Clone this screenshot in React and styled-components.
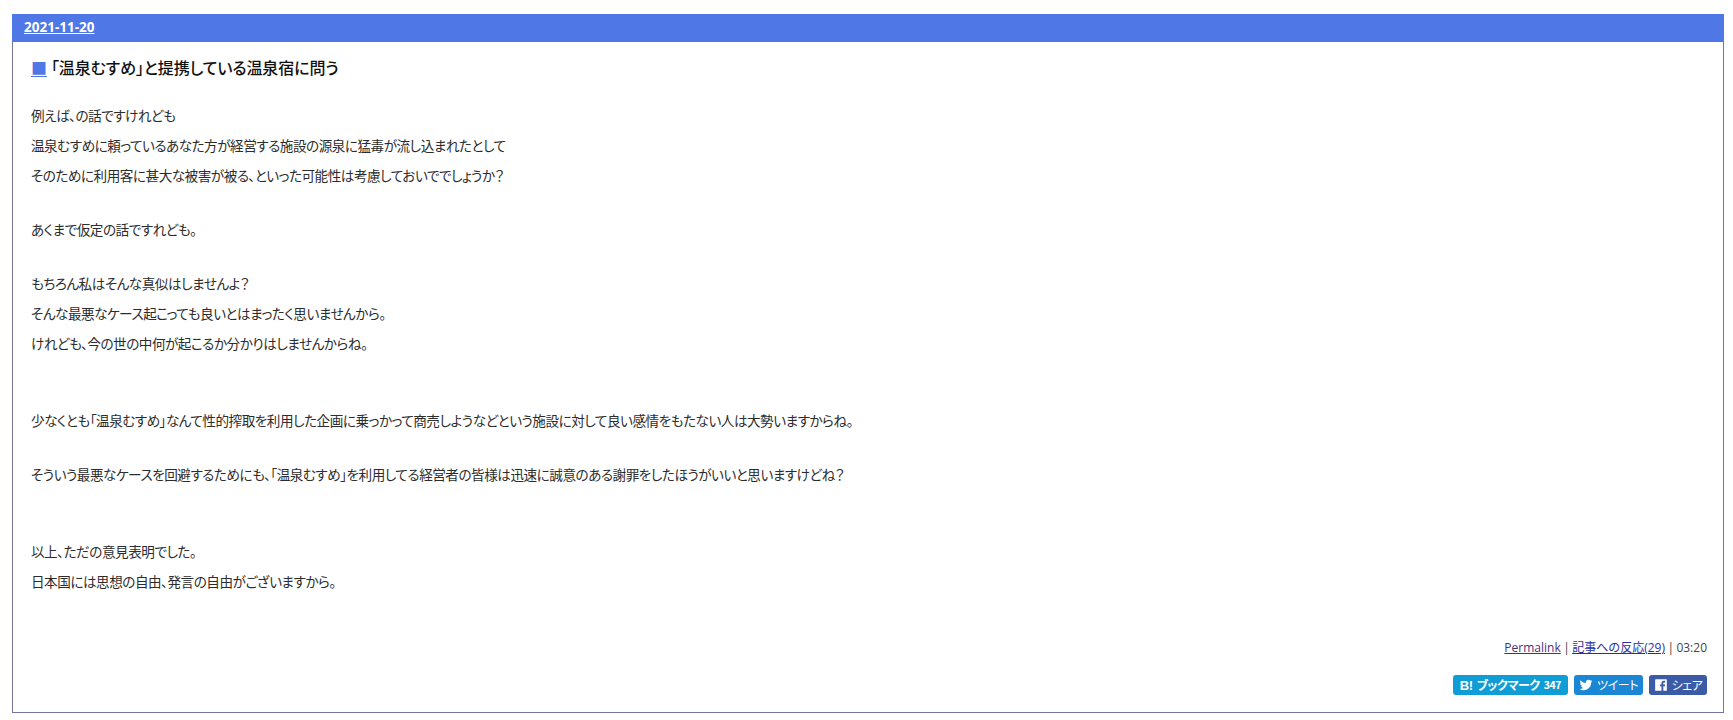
import React from "react";
import styled, { createGlobalStyle } from "styled-components";

const Global = createGlobalStyle`
  html, body { margin: 0; padding: 0; background: #fff; }
  body { font-family: "Noto Sans CJK JP", "Liberation Sans", sans-serif; color: #222; }
`;
const Page = styled.div`
  padding: 14px 9px 7px 12px;
  box-sizing: border-box;
  height: 720px;
`;
const Entry = styled.article`
  border: 1px solid #74769f;
  border-top: 0;
  height: 699px;
  box-sizing: border-box;
  display: flex;
  flex-direction: column;
`;
const DateBar = styled.h2`
  margin: 0 -1px;
  height: 28px;
  background: #4f77e6;
  padding-left: 12px;
  display: flex;
  align-items: center;
  font: bold 13.5px/1 "Open Sans", "Liberation Sans", sans-serif;
  color: #fff;
`;
const DateLink = styled.a`
  color: #fff;
  text-decoration: underline;
`;
const Body = styled.div`
  flex: 1;
  padding: 13px 16px 0 18px;
  display: flex;
  flex-direction: column;
`;
const Title = styled.h3`
  margin: 0 0 21px;
  font-size: 16px;
  line-height: 24px;
  font-weight: 500;
  color: #111;
  display: flex;
  gap: 4px;
  letter-spacing: -0.1px;
  font-feature-settings: "palt";
`;
const Mark = styled.a`
  color: #4f77e6;
  text-decoration: underline;
  text-decoration-skip-ink: none;
  text-underline-offset: 2px;
`;
const Text = styled.div`
  font-size: 13.6px;
  letter-spacing: -0.48px;
  color: #2c2c2c;
  flex: 1;
  font-feature-settings: "palt";
`;
const Line = styled.div`
  line-height: 30px;
`;
const Blank = styled.div`
  height: ${(p) => p.$h}px;
`;
const Meta = styled.div`
  align-self: flex-end;
  font: 12px/20px "Open Sans", "Noto Sans CJK JP", sans-serif;
  word-spacing: -0.7px;
  color: #444;
`;
const MetaLink = styled.a`
  color: ${(p) => p.$c};
  text-decoration: underline;
`;
const Buttons = styled.div`
  display: flex;
  justify-content: flex-end;
  gap: 6px;
  margin: 17px 0 17px;
`;
const Btn = styled.a`
  width: ${(p) => p.$w}px;
  box-sizing: border-box;
  height: 20px;
  border-radius: 3px;
  background: ${(p) => p.$bg};
  color: #fff;
  font-size: 12px;
  letter-spacing: -0.4px;
  font-feature-settings: "palt";
  font-weight: ${(p) => (p.$bold ? 700 : 400)};
  display: flex;
  align-items: center;
  justify-content: center;
  gap: 4px;
  line-height: 1;
`;
const Hatena = styled.span`
  font: bold 13px/1 "Liberation Sans", sans-serif;
`;
const Count = styled.span`
  font-size: 10.5px;
`;
const Icon = styled.svg`
  width: 14px;
  height: 14px;
  fill: #fff;
`;

const lines = [
  "例えば、の話ですけれども",
  "温泉むすめに頼っているあなた方が経営する施設の源泉に猛毒が流し込まれたとして",
  "そのために利用客に甚大な被害が被る、といった可能性は考慮しておいででしょうか？",
  24,
  "あくまで仮定の話ですれども。",
  24,
  "もちろん私はそんな真似はしませんよ？",
  "そんな最悪なケース起こっても良いとはまったく思いませんから。",
  "けれども、今の世の中何が起こるか分かりはしませんからね。",
  47,
  "少なくとも「温泉むすめ」なんて性的搾取を利用した企画に乗っかって商売しようなどという施設に対して良い感情をもたない人は大勢いますからね。",
  24,
  "そういう最悪なケースを回避するためにも、「温泉むすめ」を利用してる経営者の皆様は迅速に誠意のある謝罪をしたほうがいいと思いますけどね？",
  47,
  "以上、ただの意見表明でした。",
  "日本国には思想の自由、発言の自由がございますから。",
];

export default function App() {
  return (
    <Page>
      <Global />
      <Entry>
        <DateBar><DateLink>2021-11-20</DateLink></DateBar>
        <Body>
          <Title><Mark>■</Mark><span>「温泉むすめ」と提携している温泉宿に問う</span></Title>
          <Text>
            {lines.map((l, i) =>
              typeof l === "number" ? <Blank key={i} $h={l} /> : <Line key={i}>{l}</Line>
            )}
          </Text>
          <Meta>
            <MetaLink $c="#4b2f7f">Permalink</MetaLink> | <MetaLink $c="#2a2f9f">記事への反応(29)</MetaLink> | 03:20
          </Meta>
          <Buttons>
            <Btn $w={115} $bg="#109dd6" $bold><Hatena>B!</Hatena> ブックマーク <Count>347</Count></Btn>
            <Btn $w={69} $bg="#1b87d4">
              <Icon viewBox="0 0 24 24"><path d="M23 5.100c-.8.4-1.700.6-2.600.7.9-.6 1.600-1.400 2-2.500-.9.5-1.900.9-2.900 1.100A4.500 4.500 0 0 0 11.800 8.500C8 8.300 4.700 6.500 2.500 3.700c-1.200 2.100-.6 4.700 1.400 6-.7 0-1.400-.2-2-.6 0 2.200 1.500 4.100 3.600 4.500-.7.2-1.400.2-2 .1.600 1.800 2.200 3.100 4.200 3.100A9.100 9.100 0 0 1 1 18.700 12.900 12.900 0 0 0 8 20.800c8.400 0 13.200-7.100 12.900-13.500.9-.6 1.600-1.400 2.100-2.200z" /></Icon>
              ツイート
            </Btn>
            <Btn $w={58} $bg="#3b5ba6">
              <Icon viewBox="0 0 24 24"><path d="M3 2h18a1 1 0 0 1 1 1v18a1 1 0 0 1-1 1h-5v-8h2.700l.4-3H16V9c0-.9.300-1.500 1.500-1.500H19.200V4.800c-.3 0-1.300-.1-2.400-.1-2.400 0-4 1.400-4 4.100V11h-2.700v3h2.700v8H3a1 1 0 0 1-1-1V3a1 1 0 0 1 1-1z" /></Icon>
              シェア
            </Btn>
          </Buttons>
        </Body>
      </Entry>
    </Page>
  );
}
